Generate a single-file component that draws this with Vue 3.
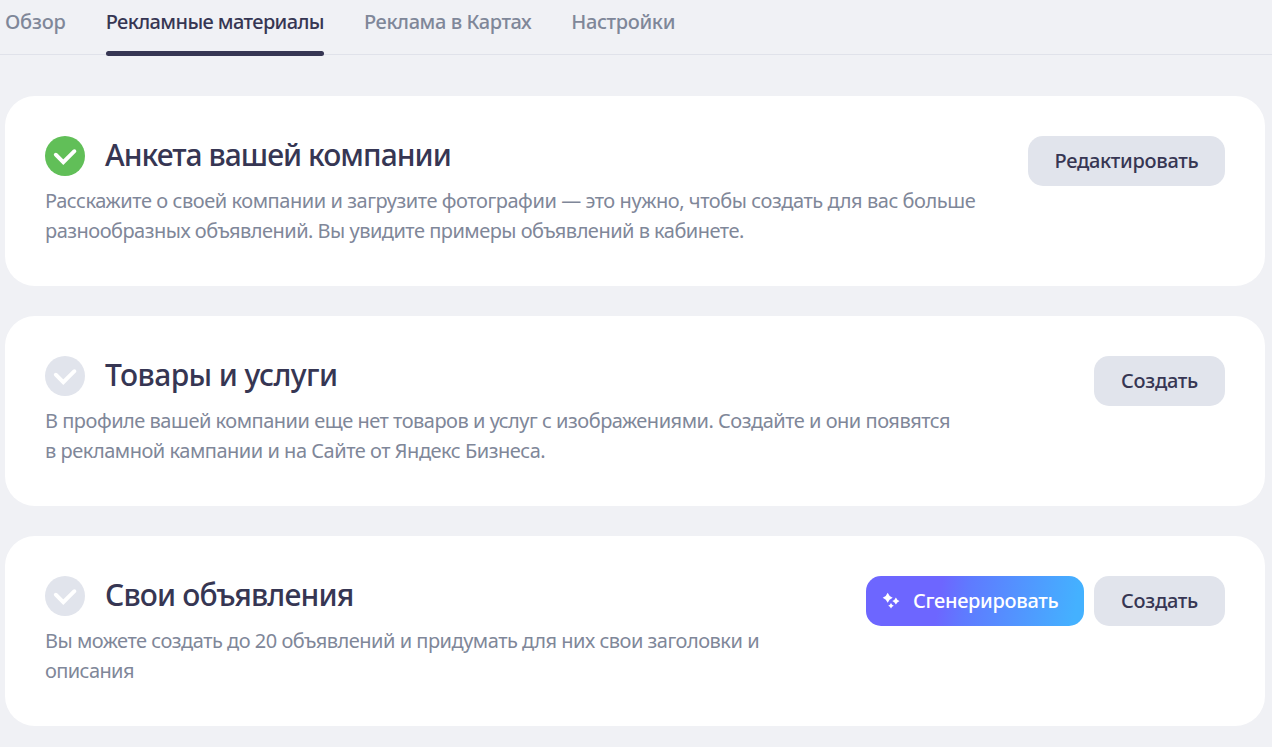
<template>
  <div class="page">
    <nav class="tabs">
      <a
        v-for="tab in tabs"
        :key="tab.id"
        class="tab"
        :class="[`tab-${tab.id}`, { active: tab.id === activeTab }]"
        @click="activeTab = tab.id"
      >
        {{ tab.title }}
      </a>
    </nav>

    <main class="cards">
      <section v-for="card in cards" :key="card.id" class="card" :class="`card-${card.id}`">
        <div class="info">
          <div class="heading">
            <svg class="status" :class="{ done: card.done }" viewBox="0 0 40 40">
              <circle cx="20" cy="20" r="20" />
              <path d="M10.8 18.7 18.3 26.2 29.4 15.2" />
            </svg>
            <h2 class="title">{{ card.title }}</h2>
          </div>
          <p class="text">
            <span v-for="(line, i) in card.lines" :key="i" class="line" :class="`line-${i + 1}`">{{ line }}</span>
          </p>
        </div>
        <div class="actions">
          <button v-if="card.generate" class="btn btn-generate">
            <svg class="sparkles" viewBox="0 0 18 18">
              <path d="M5.7 0.7Q7 4.4 10.7 5.7Q7 7 5.7 10.7Q4.4 7 0.7 5.7Q4.4 4.4 5.7 0.7Z" />
              <path d="M13.9 5.4Q14.9 8 17.5 9Q14.9 10 13.9 12.6Q12.9 10 10.3 9Q12.9 8 13.9 5.4Z" />
              <path d="M9 11Q9.8 13 11.8 13.8Q9.8 14.6 9 16.6Q8.2 14.6 6.2 13.8Q8.2 13 9 11Z" />
            </svg>
            <span>Сгенерировать</span>
          </button>
          <button class="btn" :class="`btn-${card.id}`">{{ card.action }}</button>
        </div>
      </section>
    </main>
  </div>
</template>

<script setup>
import { ref } from "vue";

const activeTab = ref("materials");

const tabs = [
  { id: "overview", title: "Обзор" },
  { id: "materials", title: "Рекламные материалы" },
  { id: "maps", title: "Реклама в Картах" },
  { id: "settings", title: "Настройки" },
];

const cards = [
  {
    id: "profile",
    title: "Анкета вашей компании",
    done: true,
    lines: [
      "Расскажите о своей компании и загрузите фотографии — это нужно, чтобы создать для вас больше",
      "разнообразных объявлений. Вы увидите примеры объявлений в кабинете.",
    ],
    action: "Редактировать",
  },
  {
    id: "goods",
    title: "Товары и услуги",
    done: false,
    lines: [
      "В профиле вашей компании еще нет товаров и услуг с изображениями. Создайте и они появятся",
      "в рекламной кампании и на Сайте от Яндекс Бизнеса.",
    ],
    action: "Создать",
  },
  {
    id: "ads",
    title: "Свои объявления",
    done: false,
    lines: [
      "Вы можете создать до 20 объявлений и придумать для них свои заголовки и",
      "описания",
    ],
    action: "Создать",
    generate: true,
  },
];
</script>

<style>
body {
  background: #f0f1f5;
}
</style>

<style scoped>
.page {
  height: 747px;
  overflow: hidden;
  background: #f0f1f5;
  color: #363653;
  font-family: "Noto Sans", "Open Sans", sans-serif;
  font-size: 20px;
}

.tabs {
  display: flex;
  gap: 40px;
  height: 54px;
  padding-left: 5px;
  border-bottom: 1px solid #e0e2ea;
}

.tab {
  position: relative;
  line-height: 44px;
  font-weight: 500;
  color: #7f8799;
  white-space: nowrap;
  cursor: pointer;
  letter-spacing: -0.6px;
}

.tab-overview {
  letter-spacing: -0.2px;
}

.tab-maps {
  letter-spacing: -0.42px;
}

.tab-settings {
  letter-spacing: -0.35px;
}

.tab.active {
  color: #363653;
}

.tab.active::after {
  content: "";
  position: absolute;
  left: 0;
  right: 0;
  bottom: -2px;
  height: 5px;
  border-radius: 2.5px;
  background: #363653;
}

.cards {
  display: flex;
  flex-direction: column;
  gap: 30px;
  padding: 41px 7px 0 5px;
}

.card {
  display: flex;
  justify-content: space-between;
  box-sizing: border-box;
  height: 190px;
  padding: 40px;
  border-radius: 30px;
  background: #fff;
}

.heading {
  display: flex;
  align-items: center;
  gap: 20px;
  height: 40px;
}

.status {
  flex: none;
  width: 40px;
  height: 40px;
  fill: #e1e4ec;
}

.status.done {
  fill: #61bf58;
}

.status path {
  fill: none;
  stroke: #fff;
  stroke-width: 3.9;
  stroke-linecap: round;
}

.title {
  margin: 0;
  padding-bottom: 2px;
  font-size: 30px;
  line-height: 38px;
  font-weight: 500;
  letter-spacing: -0.95px;
  white-space: nowrap;
}

.card-goods .title {
  letter-spacing: -0.57px;
}

.card-ads .title {
  letter-spacing: -0.82px;
}

.text {
  margin: 10px 0 0;
  line-height: 30px;
  color: #7f8799;
}

.line {
  display: block;
  white-space: nowrap;
  letter-spacing: -0.49px;
}

.card-profile .line-1 {
  letter-spacing: -0.44px;
}

.card-profile .line-2 {
  letter-spacing: -0.51px;
}

.card-goods .line-2 {
  letter-spacing: -0.48px;
}

.card-ads .line-2 {
  letter-spacing: -0.6px;
}

.actions {
  display: flex;
  gap: 10px;
  height: 50px;
}

.btn {
  display: flex;
  align-items: center;
  justify-content: center;
  box-sizing: border-box;
  width: 131px;
  height: 50px;
  padding: 0 0 2px;
  border: none;
  border-radius: 15px;
  background: #e1e4ec;
  color: #363653;
  font-family: inherit;
  font-size: 20px;
  font-weight: 500;
  letter-spacing: -0.3px;
  cursor: pointer;
}

.btn-profile {
  width: 197px;
}

.btn-generate {
  justify-content: flex-start;
  gap: 13px;
  width: 218px;
  padding-left: 16px;
  background: linear-gradient(100deg, #6d66ff 34%, #5f7aff 46%, #44b1ff 95%);
  color: #fff;
}

.sparkles {
  width: 18px;
  height: 18px;
  margin-top: 2px;
  fill: #fff;
}
</style>
